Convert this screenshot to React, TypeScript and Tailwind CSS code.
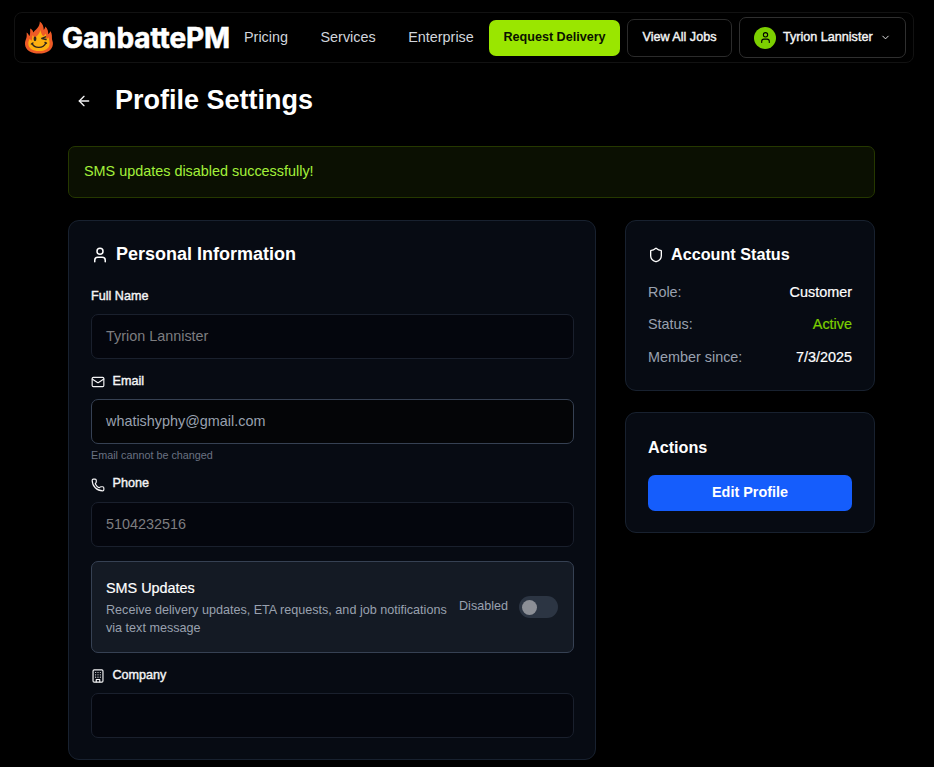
import React from "react";
import { ArrowLeft, ChevronDown, Mail, Phone, Shield, User } from "lucide-react";

function BuildingIcon({ className }: { className: string }) {
  return (
    <svg viewBox="0 0 24 24" fill="none" stroke="currentColor" strokeWidth="2" strokeLinecap="round" strokeLinejoin="round" className={className}>
      <rect x="3.500" y="1.500" width="17" height="21" rx="2" />
      <path d="M9 22v-4h6v4M8 6h.01M12 6h.01M16 6h.01M8 10h.01M12 10h.01M16 10h.01M8 14h.01M12 14h.01M16 14h.01" />
    </svg>
  );
}

function FlameLogo() {
  return (
    <svg viewBox="0 0 30 34" className="h-[34px] w-[30px] shrink-0">
      <path d="M15.8.6c3 2.400 3.800 5 4 8.300.9-.9 1.400-1.900 1.500-3.300 2.500 2.300 3 4.900 2.900 7.700 1.200-.9 1.900-2 2.200-3.300 2 3 1.400 5.500 1.600 8.200.2 1.700 1.100 2.300.9 5C28.300 29.400 22.500 32.600 15 32.600S1.400 29.500 1 23.300c-.2-2.800 1-4.600 1.500-6.700.4-1.700.2-3.300.1-5 1.500 1 2.300 2.300 2.600 3.700C6.600 13 6.100 10.500 6.200 7.600c1.700.8 2.700 2.100 3.200 3.900C11.500 8.500 15.900 6.500 15.800.6Z" fill="#ee5a26" />
      <path d="M16.200 9c1 2.600 1.300 4.600 3.200 6.200 1-.6 1.700-1.600 2.200-2.700.8 2 .7 3.700.8 5.400 1.100-.3 1.600-.8 2.200-1.700.4 3 1.200 4 1 6.800-.4 4.800-4.400 7.100-10.600 7.100S4.700 27.800 4.300 23.100c-.2-2.300.7-3.300 1.100-5 1 .3 1.600.8 2.200 1.700.9-1.900.6-3.500.9-5.500 1 .8 1.500 1.700 1.900 2.900 2.600-2.300 5.200-4 5.800-8.200Z" fill="#fdb010" />
      <ellipse cx="11" cy="17.800" rx="1.400" ry="2.400" fill="#30241d" />
      <path d="M21.600 15.800l-3.800 1.700 4.200 1M8.200 22.500c2.200 5.300 11.200 5.200 13.600-.6M7.400 23l1.500-1M21 21.400l1.500.8" fill="none" stroke="#30241d" strokeWidth="1.400" strokeLinecap="round" strokeLinejoin="round" />
    </svg>
  );
}

const medium = "[-webkit-text-stroke:0.4px_currentColor]";

function Label({ icon, children }: { icon?: React.ReactNode; children: string }) {
  return (
    <div className="flex h-[18px] items-center gap-[7.500px] text-[12.6px] leading-[18px] text-[#f4f4f5]">
      {icon}
      <span className={medium}>{children}</span>
    </div>
  );
}

function Field({ value }: { value: string }) {
  return (
    <div className="h-[45px] rounded-[7px] border border-[#1a202d] bg-[#04060d] px-[14px] pt-[10px] text-[14.4px] leading-[22px] text-[#7d7d80]">
      {value}
    </div>
  );
}

function StatusRow({ label, value, color }: { label: string; value: string; color: string }) {
  return (
    <div className="flex h-[22px] justify-between leading-[22px]">
      <span className="text-[#99a1af]">{label}</span>
      <span className={`${color} [-webkit-text-stroke:0.2px_currentColor]`}>{value}</span>
    </div>
  );
}

export default function App() {
  return (
    <div className="h-[767px] w-[934px] overflow-hidden bg-black font-['Liberation_Sans',Arial,sans-serif] text-[14.4px] text-white">
      <header className="ml-[14px] mt-[12px] flex h-[51px] w-[900px] items-center rounded-[8px] border border-[#121212] pl-[9px] pr-[7px]">
        <FlameLogo />
        <span className="ml-[8px] w-[168px] whitespace-nowrap font-[Inter,sans-serif] text-[28px] font-bold leading-[36px] tracking-[-0.1px] [-webkit-text-stroke:0.6px_currentColor]">GanbattePM</span>
        <nav className="ml-[14px] flex gap-[32.500px] pb-[2px] leading-[22px] text-[#d1d5dc]">
          <span>Pricing</span>
          <span>Services</span>
          <span>Enterprise</span>
        </nav>
        <div className="ml-auto flex items-center gap-[7px] text-[12.6px] text-[#f4f4f5]">
          <button className="h-[36px] w-[131px] rounded-[7px] bg-[#9ae600] pb-[1px] font-bold text-[#0b1200]">
            Request Delivery
          </button>
          <button className="h-[38px] w-[105px] rounded-[7px] border border-[#2b2b2b] pb-px">
            <span className={medium}>View All Jobs</span>
          </button>
          <button className="flex h-[41px] w-[167px] items-center rounded-[7px] border border-[#2f2f2f] pl-[14px]">
            <span className="flex size-[22px] items-center justify-center rounded-full bg-[#7ccf00] text-black">
              <User className="size-[13px]" />
            </span>
            <span className={`ml-[7px] pb-px ${medium}`}>Tyrion Lannister</span>
            <ChevronDown className="ml-[7px] size-[11px]" />
          </button>
        </div>
      </header>

      <main className="ml-[68px] w-[807px]">
        <div className="mt-[18px] flex h-[40px] items-center">
          <ArrowLeft className="ml-[8px] size-[16px] text-[#f4f4f5]" />
          <h1 className="ml-[23px] pb-[3px] text-[27px] font-bold leading-[36px]">Profile Settings</h1>
        </div>

        <div className="mt-[25px] h-[52px] rounded-[7px] border border-[#253800] bg-[#0b1002] px-[15px] pt-[13px] leading-[22px] text-[#a3f03a]">
          SMS updates disabled successfully!
        </div>

        <div className="mt-[22px] flex items-start gap-[29px]">
          <section className="h-[540px] w-[528px] rounded-[11px] border border-[#18212f] bg-[#070b13] pl-[22px] pr-[21px]">
            <h2 className="mt-[20px] flex h-[26px] items-center text-[18px] font-bold leading-[26px]">
              <User className="mt-[2px] size-[18px]" />
              <span className="ml-[7px]">Personal Information</span>
            </h2>
            <div className="mt-[20px]">
              <Label>Full Name</Label>
              <div className="mt-[9px]"><Field value="Tyrion Lannister" /></div>
            </div>
            <div className="mt-[13px]">
              <Label icon={<Mail className="mt-[2px] size-[14px]" />}>Email</Label>
              <div className="mt-[9px] h-[45px] rounded-[7px] border border-[#364153] bg-[#040507] px-[14px] pt-[10px] leading-[22px] text-[#99a1af]">whatishyphy@gmail.com</div>
              <p className="mt-[4px] text-[10.8px] leading-[14px] text-[#6a7282]">Email cannot be changed</p>
            </div>
            <div className="mt-[12px]">
              <Label icon={<Phone className="mt-[3px] size-[14px]" />}>Phone</Label>
              <div className="mt-[10px]"><Field value="5104232516" /></div>
            </div>
            <div className="mt-[14px] flex h-[92px] items-center rounded-[7px] border border-[#364153] bg-[#141a24] px-[14px]">
              <div className="w-[353px]">
                <p className="text-[14.4px] leading-[20px] [-webkit-text-stroke:0.2px_currentColor]">SMS Updates</p>
                <p className="mt-[3px] text-[12.6px] leading-[18px] text-[#99a1af]">
                  Receive delivery updates, ETA requests, and job notifications
                  <br />
                  via text message
                </p>
              </div>
              <span className="pb-[3px] text-[12.6px] leading-[18px] text-[#99a1af]">Disabled</span>
              <div className="ml-auto mr-[1px] flex h-[22px] w-[39px] items-center rounded-full bg-[#2c3543] pl-[3px]">
                <span className="size-[15px] rounded-full bg-[#8c8f96]" />
              </div>
            </div>
            <div className="mt-[13px]">
              <Label icon={<BuildingIcon className="mt-[2px] size-[14px]" />}>Company</Label>
              <div className="mt-[9px]"><Field value="" /></div>
            </div>
          </section>

          <aside className="flex w-[250px] flex-col gap-[21px]">
            <section className="h-[171px] rounded-[11px] border border-[#18212f] bg-[#070b13] px-[22px]">
              <h3 className="mt-[21px] flex h-[25px] items-center text-[16.2px] font-bold leading-[25px]">
                <Shield className="mt-px size-[16px]" />
                <span className="ml-[7px]">Account Status</span>
              </h3>
              <div className="mt-[14px] flex flex-col gap-[10.400px]">
                <StatusRow label="Role:" value="Customer" color="text-white" />
                <StatusRow label="Status:" value="Active" color="text-[#7ccf00]" />
                <StatusRow label="Member since:" value="7/3/2025" color="text-white" />
              </div>
            </section>
            <section className="h-[121px] rounded-[11px] border border-[#18212f] bg-[#070b13] px-[22px]">
              <h3 className="mt-[22px] text-[16.2px] font-bold leading-[25px]">Actions</h3>
              <button className="mt-[15px] h-[36px] w-full rounded-[7px] bg-[#155dfc] pb-px text-[14.4px] font-bold">Edit Profile</button>
            </section>
          </aside>
        </div>
      </main>
    </div>
  );
}
